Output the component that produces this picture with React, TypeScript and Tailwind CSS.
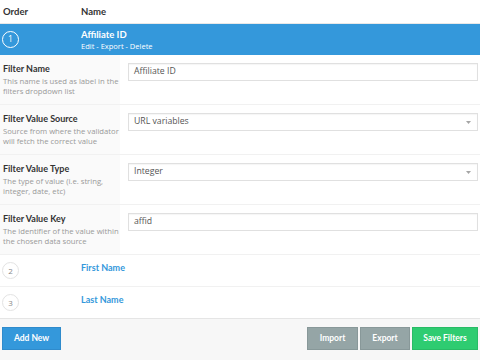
import React from "react";

const lato = { fontFamily: "Lato, 'Open Sans', sans-serif" };

function Circle({ n, active }: { n: number; active?: boolean }) {
  return (
    <div
      className={
        active
          ? "w-[17px] h-[17px] rounded-full border border-white flex items-center justify-center text-[8.5px] text-white"
          : "w-[17px] h-[17px] rounded-full border border-[#e3e3e3] bg-white flex items-center justify-center text-[8px] text-[#888]"
      }
      style={{ fontFamily: "'Open Sans', sans-serif" }}
    >
      {n}
    </div>
  );
}

function Arrow() {
  return (
    <svg width="5" height="3" viewBox="0 0 5 3" className="absolute right-[6px] top-[7px]">
      <path d="M0 0 L5 0 L2.5 3 Z" fill="#a5a5a5" />
    </svg>
  );
}

function DetailRow({
  title,
  desc,
  value,
  select,
}: {
  title: string;
  desc: string[];
  value: string;
  select?: boolean;
}) {
  return (
    <div className="flex h-[50px] border-b border-[#f1f1f1]">
      <div className="w-[120px] bg-[#fafafa] pl-[3px] pt-[8px]">
        <div className="text-[9px] font-bold text-[#333] leading-[12px] mb-[1px]" style={lato}>
          {title}
        </div>
        {desc.map((d, i) => (
          <div key={i} className="text-[7.7px] text-[#999] leading-[10px] whitespace-nowrap">
            {d}
          </div>
        ))}
      </div>
      <div className="flex-1 bg-white pl-[8px] pr-[2px] pt-[8px]">
        <div className="relative h-[18px] border border-[#e0e0e0] shadow-[inset_0_1px_1px_rgba(0,0,0,0.04)] bg-white flex items-center pl-[5px] text-[8.7px] text-[#555]">
          {value}
          {select && <Arrow />}
        </div>
      </div>
    </div>
  );
}

export default function App() {
  return (
    <div
      className="w-[480px] h-[360px] bg-white flex flex-col overflow-hidden"
      style={{ fontFamily: "'Open Sans', sans-serif" }}
    >
      {/* Header */}
      <div className="h-[24px] flex items-center border-b border-[#e8e8e8] text-[9.5px] font-bold text-[#333] pt-[1px]" style={lato}>
        <div className="w-[81px] pl-[3px]">Order</div>
        <div>Name</div>
      </div>

      {/* Active row */}
      <div className="h-[31px] bg-[#3498db] flex items-center">
        <div className="w-[81px] pl-[2px]">
          <Circle n={1} active />
        </div>
        <div className="text-white pt-[1px]">
          <div className="text-[9.5px] font-bold leading-[12px]" style={lato}>
            Affiliate ID
          </div>
          <div className="text-[7.5px] leading-[11px]">Edit - Export - Delete</div>
        </div>
      </div>

      {/* Details */}
      <DetailRow
        title="Filter Name"
        desc={["This name is used as label in the", "filters dropdown list"]}
        value="Affiliate ID"
      />
      <DetailRow
        title="Filter Value Source"
        desc={["Source from where the validator", "will fetch the correct value"]}
        value="URL variables"
        select
      />
      <DetailRow
        title="Filter Value Type"
        desc={["The type of value (i.e. string,", "integer, date, etc)"]}
        value="Integer"
        select
      />
      <DetailRow
        title="Filter Value Key"
        desc={["The identifier of the value within", "the chosen data source"]}
        value="affid"
      />

      {/* Other rows */}
      <div className="h-[32px] flex border-b border-[#f1f1f1]">
        <div className="w-[81px] pl-[2px] flex items-center">
          <Circle n={2} />
        </div>
        <div className="pt-[6px] text-[9px] font-bold text-[#3498db]" style={lato}>
          First Name
        </div>
      </div>
      <div className="h-[32px] flex border-b border-[#e5e5e5]">
        <div className="w-[81px] pl-[2px] flex items-center">
          <Circle n={3} />
        </div>
        <div className="pt-[6px] text-[9px] font-bold text-[#3498db]" style={lato}>
          Last Name
        </div>
      </div>

      {/* Footer */}
      <div className="flex-1 bg-[#f7f7f7] flex items-start pt-[8px] px-[2px]">
        <button
          className="h-[23px] w-[59px] bg-[#3498db] text-white text-[8.5px] font-bold border border-[#2f8bcc]"
          style={lato}
        >
          Add New
        </button>
        <div className="flex-1" />
        <button
          className="h-[23px] w-[51px] bg-[#95a5a6] text-white text-[8.5px] font-bold border border-[#889899]"
          style={lato}
        >
          Import
        </button>
        <button
          className="ml-[2px] h-[23px] w-[50px] bg-[#95a5a6] text-white text-[8.5px] font-bold border border-[#889899]"
          style={lato}
        >
          Export
        </button>
        <button
          className="ml-[2px] h-[23px] w-[66px] bg-[#2ecc71] text-white text-[8.5px] font-bold border border-[#29bb66]"
          style={lato}
        >
          Save Filters
        </button>
      </div>
    </div>
  );
}
